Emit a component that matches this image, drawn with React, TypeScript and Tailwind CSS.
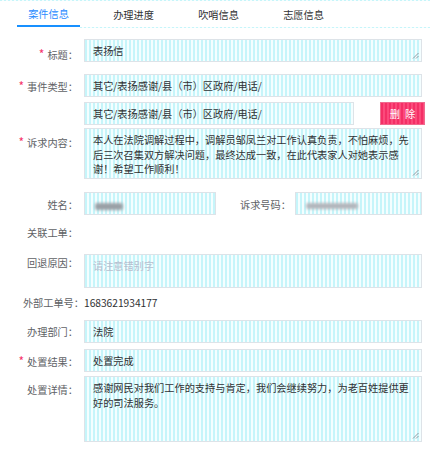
import React from 'react';

const stripe =
  'bg-[repeating-linear-gradient(90deg,#c6f5fa_0px,#c6f5fa_2px,#f4feff_2px,#f4feff_4px)]';

function Grip() {
  return (
    <svg
      width="7"
      height="7"
      viewBox="0 0 7 7"
      className="absolute right-[2px] bottom-[2px]"
    >
      <path d="M6.5 1 L1 6.5 M6.5 4 L4 6.5" stroke="#8a8f96" strokeWidth="0.9" />
    </svg>
  );
}

function Label({ text, required, pt }: { text: string; required?: boolean; pt: string }) {
  return (
    <div className={`w-[84px] shrink-0 pr-[6px] text-right text-[#606266] leading-[14px] whitespace-nowrap ${pt}`}>
      {required && <span className="text-[#f5336b] mr-[3px] text-[12px]">*</span>}
      {text}：
    </div>
  );
}

function Field({
  children,
  h,
  grip,
  className = ''
}: {
  children?: React.ReactNode;
  h: string;
  grip?: boolean;
  className?: string;
}) {
  return (
    <div
      className={`relative border border-[#dde3e8] ${stripe} ${h} pl-[8px] pt-[4px] leading-[14.5px] text-[#303133] ${className}`}
    >
      {children}
      {grip && <Grip />}
    </div>
  );
}

export default function App() {
  const tabs = ['案件信息', '办理进度', '吹哨信息', '志愿信息'];

  return (
    <div
      className="w-[430px] h-[450px] bg-white text-[10.2px] overflow-hidden"
      style={{ fontFamily: '"Noto Sans CJK SC", "Noto Sans", sans-serif' }}
    >
      {/* top stripe line */}
      <div className={`h-px ${stripe}`} />

      {/* Tabs */}
      <div className="relative flex h-[26px] pl-[17px] gap-[22px]">
        {tabs.map((t, i) => (
          <div
            key={t}
            className={`w-[63px] flex items-center justify-center pt-[1px] ${
              i === 0 ? 'text-[#2a8cff] border-b-2 border-[#1890ff]' : 'text-[#303133]'
            }`}
          >
            {t}
          </div>
        ))}
      </div>
      <div className={`ml-[80px] h-px ${stripe}`} />

      <div className="pr-[8px]">
        {/* 标题 */}
        <div className="flex mt-[11px]">
          <Label text="标题" required pt="pt-[8px]" />
          <Field h="h-[23px]" grip className="flex-1">
            表扬信
          </Field>
        </div>

        {/* 事件类型 */}
        <div className="flex mt-[12px]">
          <Label text="事件类型" required pt="pt-[5px]" />
          <Field h="h-[23px]" className="flex-1">
            其它/表扬感谢/县（市）区政府/电话/
          </Field>
        </div>
        <div className="flex mt-[5px]">
          <div className="w-[84px] shrink-0" />
          <Field h="h-[23px]" className="w-[270px] shrink-0">
            其它/表扬感谢/县（市）区政府/电话/
          </Field>
          <div className="ml-[26px] w-[45px] shrink-0 h-[23px] flex items-center justify-center gap-[5px] text-white border border-[#f06a8e] bg-[repeating-linear-gradient(90deg,#f42f66_0px,#f42f66_2px,#fb4a7b_2px,#fb4a7b_4px)]">
            <span>删</span>
            <span>除</span>
          </div>
        </div>

        {/* 诉求内容 */}
        <div className="flex mt-[3px]">
          <Label text="诉求内容" required pt="pt-[7px]" />
          <Field h="h-[51px]" grip className="flex-1">
            本人在法院调解过程中，调解员邹凤兰对工作认真负责，不怕麻烦，先
            <br />
            后三次召集双方解决问题，最终达成一致，在此代表家人对她表示感
            <br />
            谢！希望工作顺利！
          </Field>
        </div>

        {/* 姓名 / 诉求号码 */}
        <div className="flex mt-[13px]">
          <Label text="姓名" pt="pt-[6px]" />
          <Field h="h-[23px]" className="w-[132px] flex items-start">
            <div className="mt-[6px] ml-[2px] w-[28px] h-[7px] rounded-[2px] bg-[#9aa0a6] blur-[1.5px]" />
          </Field>
          <div className="ml-[24px] pt-[6px] leading-[14px] text-[#606266] whitespace-nowrap">诉求号码：</div>
          <Field h="h-[23px]" className="ml-[4px] flex-1 flex items-start">
            <div className="mt-[6px] ml-[2px] w-[52px] h-[6px] rounded-[2px] bg-[#b3b6bc] blur-[1.5px]" />
          </Field>
        </div>

        {/* 关联工单 */}
        <div className="flex mt-[11px]">
          <Label text="关联工单" pt="pt-0" />
        </div>

        {/* 回退原因 */}
        <div className="flex mt-[14px]">
          <Label text="回退原因" pt="pt-[2px]" />
          <Field h="h-[34px]" className="flex-1 text-[#b7bfcf]">
            请注意错别字
          </Field>
        </div>

        {/* 外部工单号 */}
        <div className="flex mt-[8px] leading-[14px]">
          <div className="w-[84px] shrink-0 text-right text-[#606266] whitespace-nowrap">外部工单号：</div>
          <div className="text-[#303133]">1683621934177</div>
        </div>

        {/* 办理部门 */}
        <div className="flex mt-[10px]">
          <Label text="办理部门" pt="pt-[5px]" />
          <Field h="h-[23px]" className="flex-1">
            法院
          </Field>
        </div>

        {/* 处置结果 */}
        <div className="flex mt-[6px]">
          <Label text="处置结果" required pt="pt-[5px]" />
          <Field h="h-[23px]" className="flex-1">
            处置完成
          </Field>
        </div>

        {/* 处置详情 */}
        <div className="flex mt-[4px]">
          <Label text="处置详情" pt="pt-[7px]" />
          <Field h="h-[66px]" grip className="flex-1">
            感谢网民对我们工作的支持与肯定，我们会继续努力，为老百姓提供更
            <br />
            好的司法服务。
          </Field>
        </div>
      </div>
    </div>
  );
}
